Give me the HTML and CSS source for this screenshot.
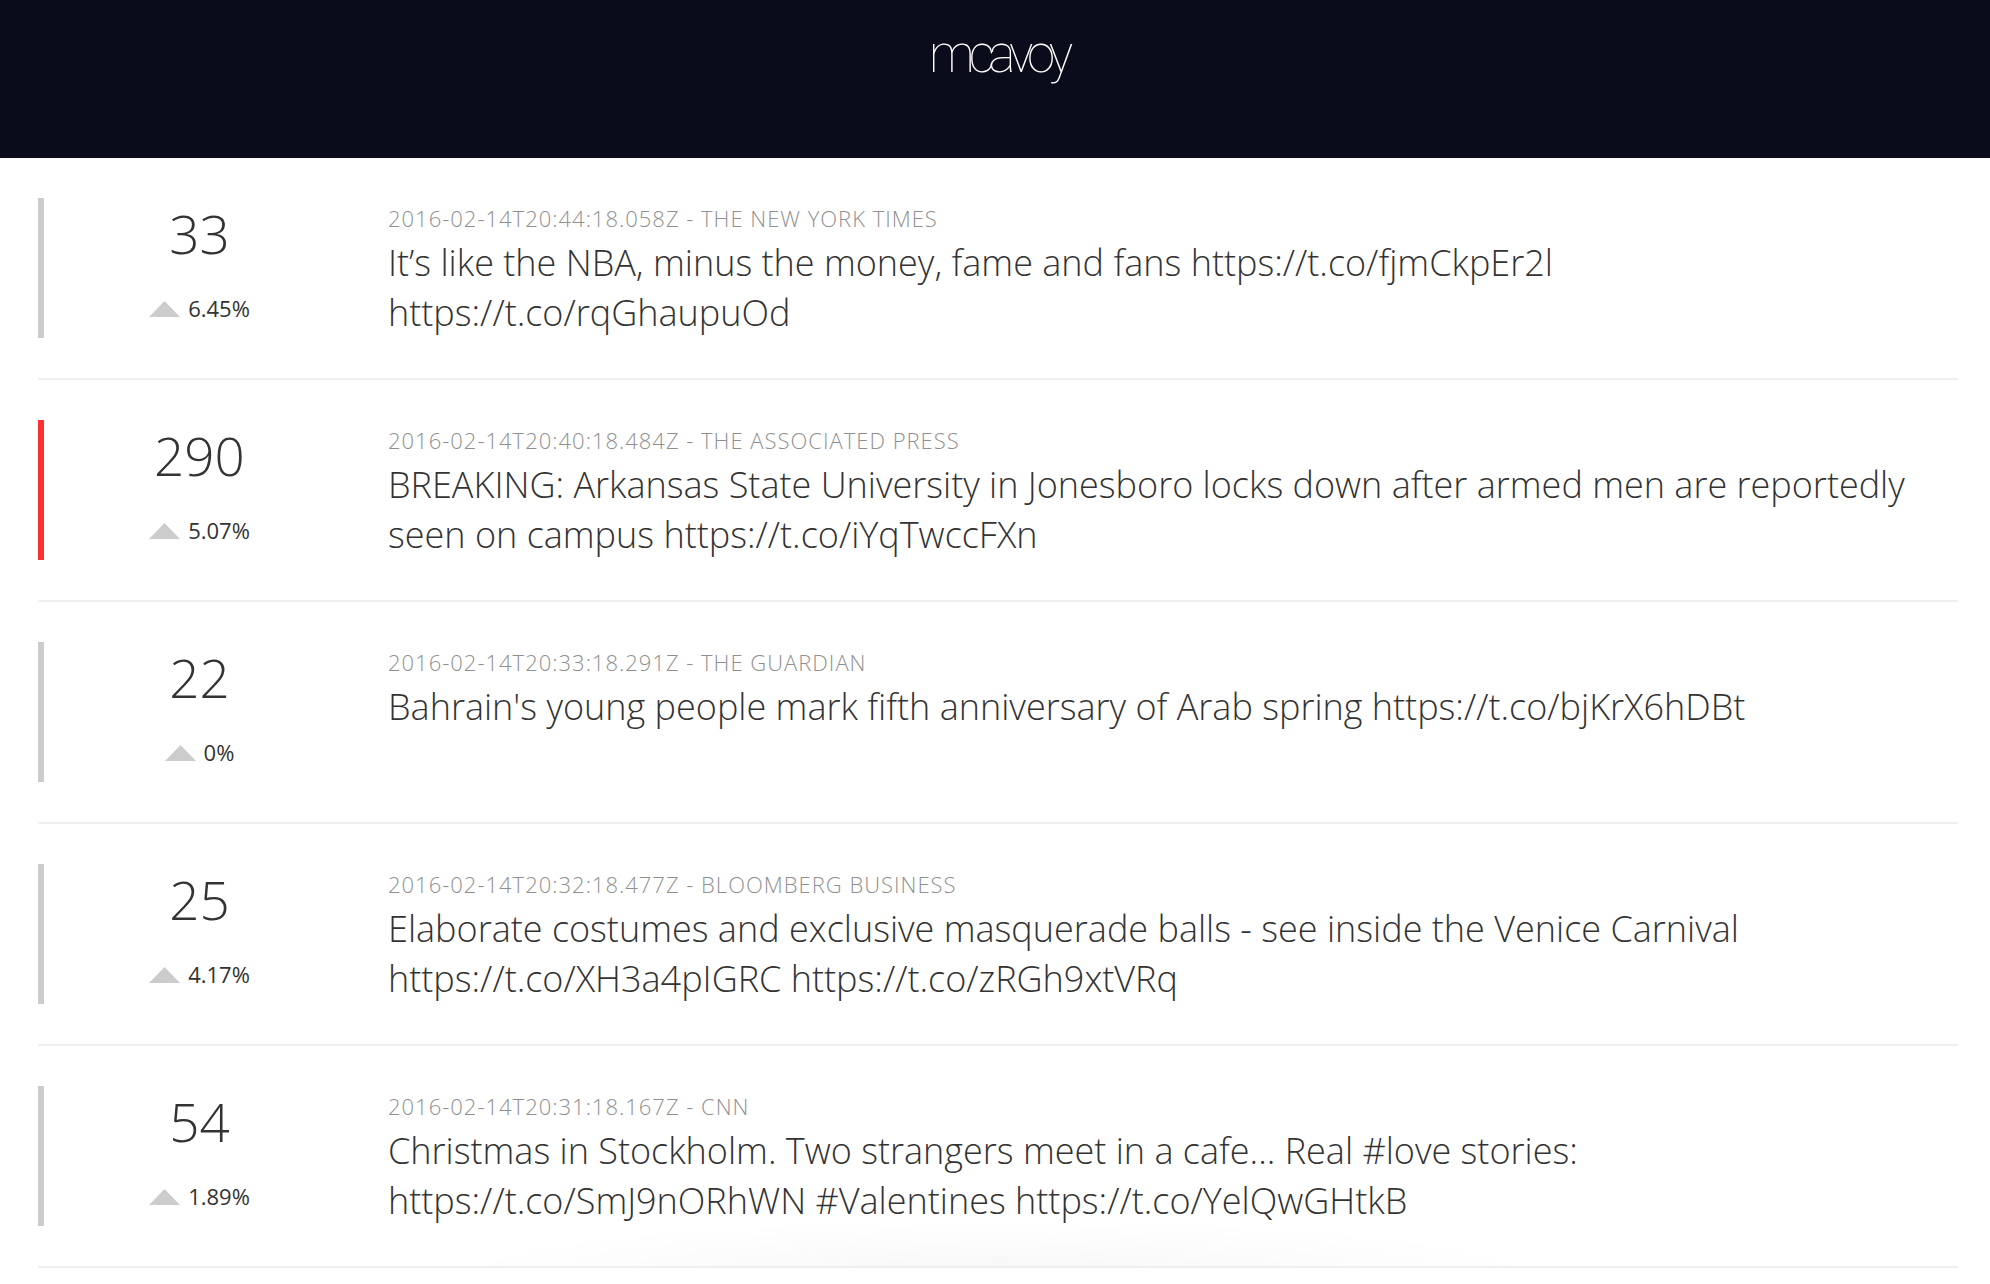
FILE: index.html
```html
<!DOCTYPE html>
<html lang="en">
<head>
<meta charset="utf-8">
<title>mcavoy</title>
<link rel="stylesheet" href="styles.css">
</head>
<body>
<header class="topbar">
  <div class="logo">mcavoy</div>
</header>
<main class="feed">
  <article class="story">
    <div class="story-inner">
      <div class="score">
        <div class="count">33</div>
        <div class="change"><svg class="tri" width="31" height="16" viewBox="0 0 31 16"><polygon points="0,16 15.5,0 31,16" fill="#cccccc"/></svg><span>6.45%</span></div>
      </div>
      <div class="body">
        <div class="meta">2016-02-14T20:44:18.058Z - THE NEW YORK TIMES</div>
        <div class="text">It’s like the NBA, minus the money, fame and fans https://t.co/fjmCkpEr2l https://t.co/rqGhaupuOd</div>
      </div>
    </div>
  </article>
  <article class="story">
    <div class="story-inner hot">
      <div class="score">
        <div class="count">290</div>
        <div class="change"><svg class="tri" width="31" height="16" viewBox="0 0 31 16"><polygon points="0,16 15.5,0 31,16" fill="#cccccc"/></svg><span>5.07%</span></div>
      </div>
      <div class="body">
        <div class="meta">2016-02-14T20:40:18.484Z - THE ASSOCIATED PRESS</div>
        <div class="text">BREAKING: Arkansas State University in Jonesboro locks down after armed men are reportedly seen on campus https://t.co/iYqTwccFXn</div>
      </div>
    </div>
  </article>
  <article class="story">
    <div class="story-inner">
      <div class="score">
        <div class="count">22</div>
        <div class="change"><svg class="tri" width="31" height="16" viewBox="0 0 31 16"><polygon points="0,16 15.5,0 31,16" fill="#cccccc"/></svg><span>0%</span></div>
      </div>
      <div class="body">
        <div class="meta">2016-02-14T20:33:18.291Z - THE GUARDIAN</div>
        <div class="text">Bahrain's young people mark fifth anniversary of Arab spring https://t.co/bjKrX6hDBt</div>
      </div>
    </div>
  </article>
  <article class="story">
    <div class="story-inner">
      <div class="score">
        <div class="count">25</div>
        <div class="change"><svg class="tri" width="31" height="16" viewBox="0 0 31 16"><polygon points="0,16 15.5,0 31,16" fill="#cccccc"/></svg><span>4.17%</span></div>
      </div>
      <div class="body">
        <div class="meta">2016-02-14T20:32:18.477Z - BLOOMBERG BUSINESS</div>
        <div class="text">Elaborate costumes and exclusive masquerade balls - see inside the Venice Carnival https://t.co/XH3a4pIGRC https://t.co/zRGh9xtVRq</div>
      </div>
    </div>
  </article>
  <article class="story">
    <div class="story-inner">
      <div class="score">
        <div class="count">54</div>
        <div class="change"><svg class="tri" width="31" height="16" viewBox="0 0 31 16"><polygon points="0,16 15.5,0 31,16" fill="#cccccc"/></svg><span>1.89%</span></div>
      </div>
      <div class="body">
        <div class="meta">2016-02-14T20:31:18.167Z - CNN</div>
        <div class="text">Christmas in Stockholm. Two strangers meet in a cafe... Real #love stories: https://t.co/SmJ9nORhWN #Valentines https://t.co/YelQwGHtkB</div>
      </div>
    </div>
  </article>
  <div class="glow"></div>
</main>
</body>
</html>
```
FILE: styles.css
```css
html, body {
  margin: 0;
  padding: 0;
  background: #ffffff;
}
body {
  font-family: "Open Sans", "Liberation Sans", sans-serif;
  color: #333333;
  overflow: hidden;
}
.topbar {
  background: #0b0c1b;
  height: 158px;
  box-sizing: border-box;
  padding-top: 25px;
  display: flex;
  justify-content: center;
}
.logo {
  font-family: Roboto, "Liberation Sans", sans-serif;
  font-weight: 100;
  font-size: 51px;
  line-height: 60px;
  letter-spacing: -6px;
  color: #ffffff;
  padding-left: 6px;
}
.feed {
  margin-left: 38px;
  width: 1920px;
  position: relative;
}
.story {
  padding: 40px 0;
  border-bottom: 2px solid #efefef;
  position: relative;
  z-index: 1;
}
.story-inner {
  display: flex;
  height: 140px;
  border-left: 6px solid #cccccc;
}
.story-inner.hot {
  border-left-color: #fc3030;
}
.score {
  width: 311px;
  flex: none;
  padding-top: 6px;
  display: flex;
  flex-direction: column;
  align-items: center;
}
.count {
  font-size: 53px;
  font-weight: 300;
  line-height: 60px;
  color: #333333;
}
.change {
  margin-top: 29px;
  font-size: 22px;
  line-height: 30px;
  color: #333333;
  white-space: nowrap;
}
.tri {
  margin-right: 8px;
}
.body {
  flex: 1;
  padding-left: 33px;
  padding-right: 33px;
  padding-top: 4px;
  min-width: 0;
}
.meta {
  font-size: 22px;
  font-weight: 300;
  line-height: 32px;
  letter-spacing: 1px;
  color: #909090;
}
.text {
  margin-top: 4px;
  font-size: 36px;
  font-weight: 300;
  line-height: 50px;
  color: #333333;
}
.glow {
  position: absolute;
  left: 400px;
  right: 400px;
  bottom: -60px;
  height: 110px;
  background: radial-gradient(ellipse at center, rgba(0,0,0,0.03) 0%, rgba(0,0,0,0) 70%);
  z-index: 0;
}
```
